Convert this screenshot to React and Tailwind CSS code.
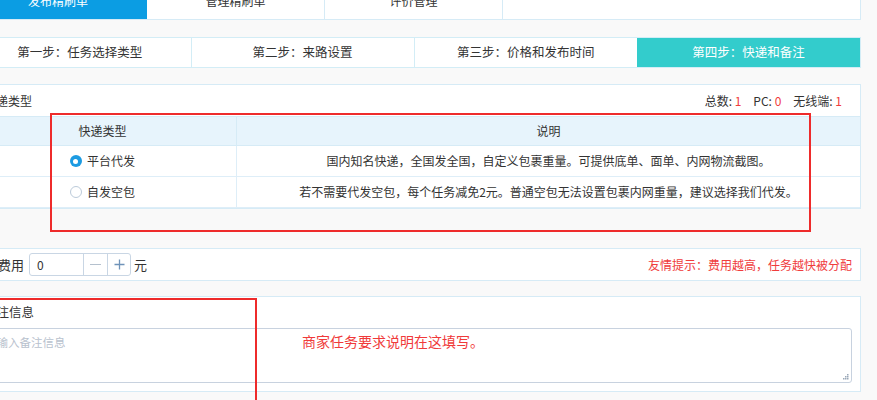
import React from 'react';

const font = { fontFamily: '"Noto Sans CJK SC", "Liberation Sans", sans-serif' };

function Radio({ checked }) {
  return checked ? (
    <span className="w-[12px] h-[12px] rounded-full bg-[#1c9be2] flex items-center justify-center">
      <span className="w-[5px] h-[5px] rounded-full bg-white" />
    </span>
  ) : (
    <span className="w-[12px] h-[12px] rounded-full bg-white border border-[#bccbda]" />
  );
}

export default function App() {
  const rows = [
    {
      label: '平台代发',
      checked: true,
      desc: '国内知名快递，全国发全国，自定义包裹重量。可提供底单、面单、内网物流截图。',
    },
    {
      label: '自发空包',
      checked: false,
      desc: '若不需要代发空包，每个任务减免2元。普通空包无法设置包裹内网重量，建议选择我们代发。',
    },
  ];

  return (
    <div className="relative w-[877px] h-[400px] overflow-hidden bg-[#f9f9f9] text-[12px] text-[#333]" style={font}>
      <div className="ml-[-31px] w-[892px]">
        {/* top tabs */}
        <div className="mt-[-18px] h-[38px] flex bg-white border-b border-r border-[#d6ebf6]">
          <div className="w-[178px] flex items-center justify-center bg-[#0b9de3] text-white">发布精刷单</div>
          <div className="w-[178px] flex items-center justify-center border-r border-[#d6ebf6]">管理精刷单</div>
          <div className="w-[178px] flex items-center justify-center border-r border-[#d6ebf6]">评价管理</div>
        </div>

        {/* steps */}
        <div className="mt-[17px] h-[31px] grid grid-cols-4 bg-white border-y border-r border-[#d3edf6] text-[12.5px]">
          <div className="flex items-center justify-center border-r border-[#d3edf6]">第一步：任务选择类型</div>
          <div className="flex items-center justify-center border-r border-[#d3edf6]">第二步：来路设置</div>
          <div className="flex items-center justify-center">第三步：价格和发布时间</div>
          <div className="flex items-center justify-center bg-[#33cccc] text-white">第四步：快递和备注</div>
        </div>

        {/* express type */}
        <div className="mt-[16px] bg-white border-y border-r border-[#d6ebf6]">
          <div className="h-[31px] flex items-center justify-between pl-[15px] pr-[18px]">
            <span>快递类型</span>
            <span>
              总数: <span className="text-[#f03c3c]">1</span>
              <span className="ml-[12px]">PC: </span><span className="text-[#f03c3c]">0</span>
              <span className="ml-[12px]">无线端: </span><span className="text-[#f03c3c]">1</span>
            </span>
          </div>
          <div className="grid grid-cols-[268px_1fr]">
            <div className="h-[30px] flex items-center justify-center bg-[#e7f4fc] border-y border-r border-[#d6ebf6]">快递类型</div>
            <div className="h-[30px] flex items-center justify-center bg-[#e7f4fc] border-y border-[#d6ebf6]">说明</div>
            {rows.map((r) => (
              <React.Fragment key={r.label}>
                <div className="h-[31px] flex items-center justify-center gap-[5px] border-b border-r border-[#deeef8]">
                  <Radio checked={r.checked} />
                  <span>{r.label}</span>
                </div>
                <div className="h-[31px] flex items-center justify-center border-b border-[#deeef8]">{r.desc}</div>
              </React.Fragment>
            ))}
          </div>
        </div>

        {/* fee */}
        <div className="mt-[39px] h-[33px] flex items-center bg-white border-y border-r border-[#d6ebf6] pl-[15px] pr-[8px]">
          <span className="ml-[-12px] text-[13px]">追加费用</span>
          <div className="ml-[5px] h-[23px] flex border border-[#c9d6e4] rounded-[3px]">
            <span className="w-[53px] flex items-center pl-[7px] text-[12px]">0</span>
            <span className="w-[24px] flex items-center justify-center border-l border-[#c9d6e4]">
              <span className="w-[11px] h-[1px] bg-[#b5c1ce]" />
            </span>
            <span className="w-[23px] flex items-center justify-center border-l border-[#c9d6e4]">
              <svg width="11" height="11" viewBox="0 0 11 11">
                <path d="M5.5 0.5v10M0.5 5.5h10" stroke="#6f93b9" strokeWidth="1.3" />
              </svg>
            </span>
          </div>
          <span className="ml-[3px] text-[13px]">元</span>
          <span className="ml-auto text-[#f03c3c]">友情提示：费用越高，任务越快被分配</span>
        </div>

        {/* remarks */}
        <div className="mt-[15px] h-[96px] bg-white border-y border-r border-[#d6ebf6] pl-[9px] pr-[8px]">
          <div className="h-[31px] flex items-center pl-[6px] text-[12.5px]">备注信息</div>
          <div className="relative h-[55px] border border-[#c8d2df] rounded-[3px] pl-[6px] pt-[5px] text-[11.5px] text-[#b9c2ce]">
            请输入备注信息
            <svg className="absolute right-[2px] bottom-[2px]" width="7" height="7" viewBox="0 0 7 7">
              <rect x="5" y="1" width="1.5" height="1.5" fill="#9aa8b8" />
              <rect x="3" y="3" width="1.5" height="1.5" fill="#9aa8b8" />
              <rect x="5" y="3" width="1.5" height="1.5" fill="#9aa8b8" />
              <rect x="1" y="5" width="1.5" height="1.5" fill="#9aa8b8" />
              <rect x="3" y="5" width="1.5" height="1.5" fill="#9aa8b8" />
              <rect x="5" y="5" width="1.5" height="1.5" fill="#9aa8b8" />
            </svg>
          </div>
        </div>
      </div>

      {/* annotations */}
      <div className="absolute left-[50px] top-[113px] w-[761px] h-[119px] border-2 border-[#ee2b2b]" />
      <div className="absolute left-[-10px] top-[298px] w-[267px] h-[130px] border-2 border-[#ee2b2b]" />
      <div className="absolute left-[302px] top-[331px] text-[14px] text-[#f03a3a]">商家任务要求说明在这填写。</div>
    </div>
  );
}
